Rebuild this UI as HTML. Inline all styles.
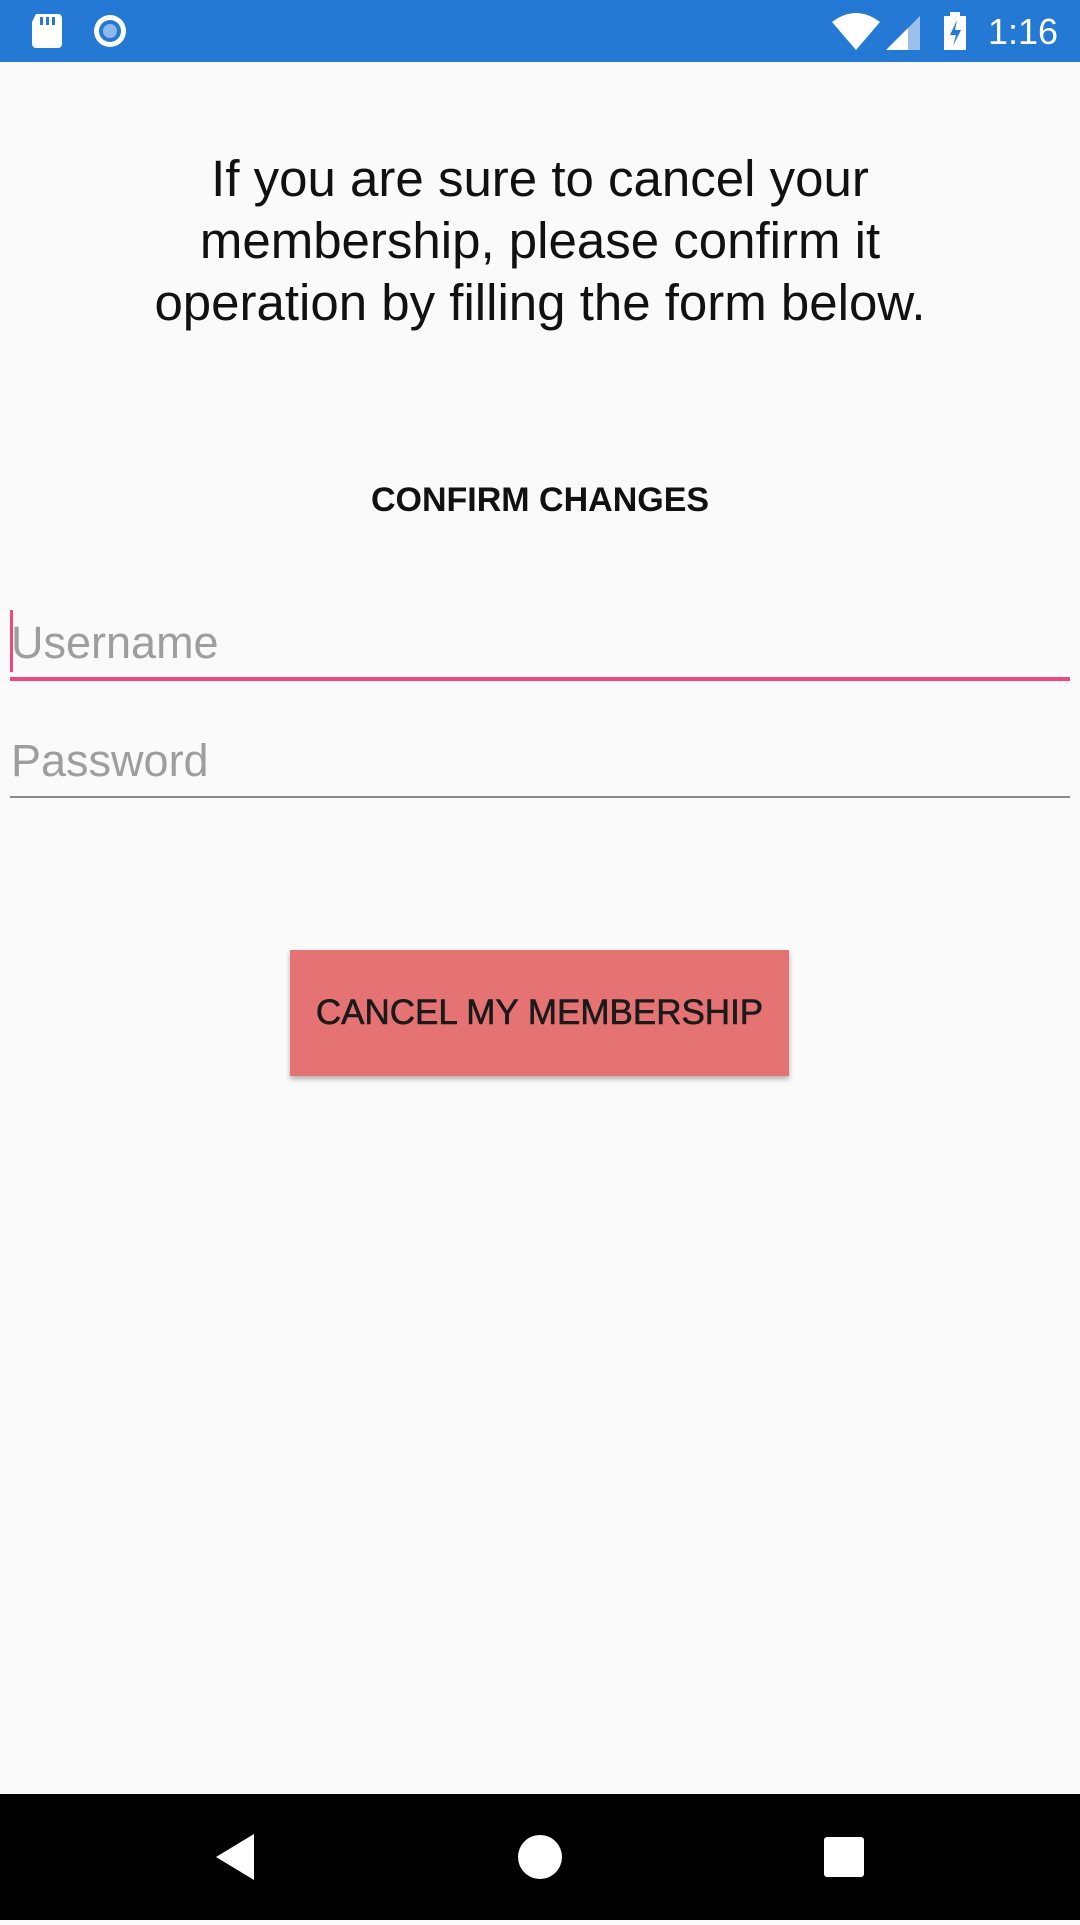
<!DOCTYPE html>
<html><head><meta charset="utf-8"><style>
*{margin:0;padding:0;box-sizing:border-box}
body{width:1080px;height:1920px;background:#fafafa;font-family:"Liberation Sans",Roboto,sans-serif;position:relative;overflow:hidden}
.sb{position:absolute;top:0;left:0;width:1080px;height:62px;background:#2479d5}
.nav{position:absolute;top:1794px;left:0;width:1080px;height:126px;background:#000}
.msg{position:absolute;top:148px;left:0;width:1080px;text-align:center;font-size:51px;line-height:62px;color:#111}
.cc{position:absolute;top:481px;left:0;width:1080px;text-align:center;font-size:34px;font-weight:bold;color:#111}
.f{position:absolute;left:11px;font-size:45px;color:#9e9e9e}
.line{position:absolute;left:10px;width:1060px}
.btn{position:absolute;left:290px;top:950px;width:499px;height:126px;background:#e57373;box-shadow:0 3px 5px rgba(0,0,0,.3);color:#1a1a1a;font-size:35px;text-align:center;line-height:126px;-webkit-text-stroke:0.6px #1a1a1a}
</style></head><body>
<div class="sb">
<svg width="1080" height="62" style="position:absolute;top:0;left:0">
<path d="M36 14h22a4 4 0 0 1 4 4v26a4 4 0 0 1-4 4H36a4 4 0 0 1-4-4V22z" fill="#fff"/>
<rect x="40" y="17" width="3" height="8" fill="#2479d5"/><rect x="46" y="17" width="3" height="8" fill="#2479d5"/><rect x="52" y="17" width="3" height="8" fill="#2479d5"/>
<circle cx="110" cy="31" r="16" fill="#fff"/><circle cx="110" cy="31" r="11" fill="#2479d5"/><circle cx="110" cy="31" r="7" fill="#8fb8ee"/>
<path d="M832 22q24-18 48 0l-24 28z" fill="#fff"/>
<path d="M886 50l34-34v34z" fill="#9cc0ee"/><path d="M886 50l22-22v22z" fill="#fff"/>
<rect x="944" y="16" width="22" height="34" fill="#fff"/><rect x="950" y="12" width="10" height="5" fill="#fff"/>
<path d="M957 20l-7 15h6l-3 11 8-16h-6z" fill="#2479d5"/>
<text x="988" y="44" fill="#fff" font-size="36" font-family="Liberation Sans">1:16</text>
</svg></div>
<div class="msg">If you are sure to cancel your<br>membership, please confirm it<br>operation by filling the form below.</div>
<div class="cc">CONFIRM CHANGES</div>
<div style="position:absolute;left:10px;top:610px;width:3px;height:62px;background:#f0487a"></div>
<div class="f" style="top:617px">Username</div>
<div class="line" style="top:677px;height:4px;background:#f0487a"></div>
<div class="f" style="top:735px">Password</div>
<div class="line" style="top:796px;height:2px;background:#8a8a8a"></div>
<div class="btn">CANCEL MY MEMBERSHIP</div>
<div class="nav"><svg width="1080" height="126">
<path d="M254 40v46l-38-23z" fill="#fff"/>
<circle cx="540" cy="63" r="22" fill="#fff"/>
<rect x="824" y="43" width="40" height="40" rx="3" fill="#fff"/>
</svg></div>
</body></html>
